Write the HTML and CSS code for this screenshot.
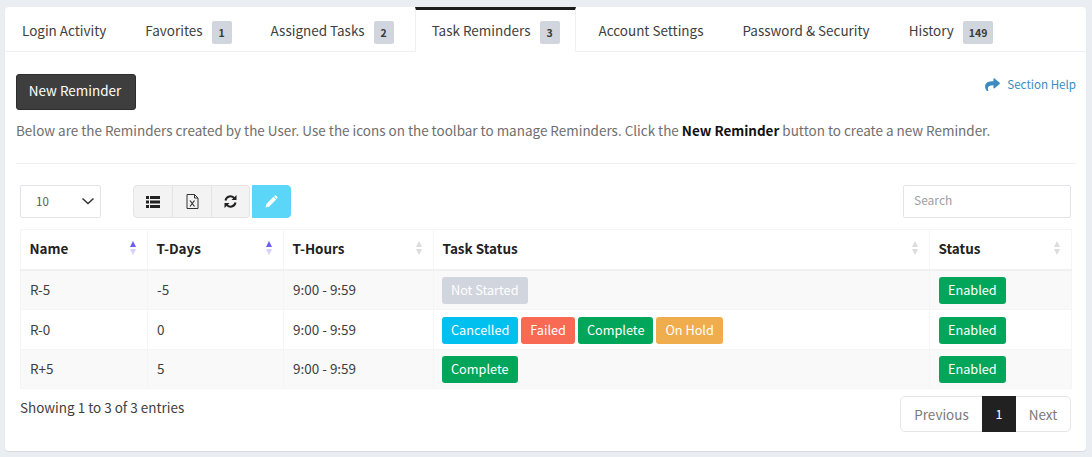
FILE: index.html
```html
<!DOCTYPE html>
<html lang="en">
<head>
<meta charset="utf-8">
<title>Task Reminders</title>
<link rel="stylesheet" href="styles.css">
</head>
<body>
<main class="card">
  <nav class="tabs">
    <a class="tab">Login Activity</a>
    <a class="tab">Favorites <span class="count">1</span></a>
    <a class="tab">Assigned Tasks <span class="count">2</span></a>
    <a class="tab active">Task Reminders <span class="count">3</span></a>
    <a class="tab">Account Settings</a>
    <a class="tab">Password &amp; Security</a>
    <a class="tab">History <span class="count">149</span></a>
  </nav>
  <section class="body">
    <div class="top">
      <button class="new">New Reminder</button>
      <a class="help">
        <svg width="15" height="13" viewBox="0 0 512 448"><path fill="#3a8bc2" d="M503 167 327 15c-15-13-39-3-39 18v80C127 115 0 147 0 299c0 61 39 122 83 154 13 10 33-2 28-18C66 290 132 251 288 249v88c0 21 24 31 39 18l176-152c11-9 11-27 0-36z"/></svg>
        Section Help
      </a>
    </div>
    <p class="intro">Below are the Reminders created by the User. Use the icons on the toolbar to manage Reminders. Click the <b>New Reminder</b> button to create a new Reminder.</p>
    <hr class="rule">
    <div class="controls">
      <div class="select">10
        <svg width="14" height="8" viewBox="0 0 14 8"><path d="M1.500 1.500 7 6.500l5.500-5" fill="none" stroke="#333" stroke-width="1.500"/></svg>
      </div>
      <div class="tools">
        <button class="tool">
          <svg width="14" height="12" viewBox="0 0 14 12"><path fill="#222" d="M0 0h3v3H0zM4 0h10v3H4zM0 4.500h3v3H0zM4 4.500h10v3H4zM0 9h3v3H0zM4 9h10v3H4z"/></svg>
        </button>
        <button class="tool">
          <svg width="13" height="15" viewBox="0 0 13 15"><path fill="none" stroke="#333" d="M1 .5h7.500l3.500 3.500v10.500H1zM8.500.5V4H12"/><path fill="none" stroke="#333" stroke-width="1.200" d="m4 6.500 4.500 6M8.500 6.500l-4.500 6"/></svg>
        </button>
        <button class="tool">
          <svg width="13" height="13" viewBox="0 0 13 13"><path fill="none" stroke="#222" stroke-width="2" d="M1.500 5.500A5 5 0 0 1 10.500 3.500M11.500 7.500A5 5 0 0 1 2.500 9.500"/><path fill="#222" d="M12.500 0v5h-5zM.5 13V8h5z"/></svg>
        </button>
        <button class="tool edit">
          <svg width="13" height="13" viewBox="0 0 13 13"><path fill="#fff" d="M8.500 1.800 11.200 4.500 4 11.700l-3.500.8.800-3.500zM9.400.9c.6-.6 1.400-.6 2 0l.7.700c.6.600.6 1.400 0 2l-.3.300L9.100 1.200z"/></svg>
        </button>
      </div>
      <input class="search" type="text" placeholder="Search">
    </div>
    <table class="grid">
      <colgroup>
        <col class="c1"><col class="c2"><col class="c3"><col class="c4"><col class="c5">
      </colgroup>
      <thead>
        <tr>
          <th class="on">Name<span class="sort"><i class="up"></i><i class="down"></i></span></th>
          <th class="on">T-Days<span class="sort"><i class="up"></i><i class="down"></i></span></th>
          <th>T-Hours<span class="sort"><i class="up"></i><i class="down"></i></span></th>
          <th>Task Status<span class="sort"><i class="up"></i><i class="down"></i></span></th>
          <th>Status<span class="sort"><i class="up"></i><i class="down"></i></span></th>
        </tr>
      </thead>
      <tbody>
        <tr class="odd">
          <td>R-5</td><td>-5</td><td>9:00 - 9:59</td>
          <td><span class="tag grey">Not Started</span></td>
          <td><span class="tag green">Enabled</span></td>
        </tr>
        <tr>
          <td>R-0</td><td>0</td><td>9:00 - 9:59</td>
          <td><span class="tag blue">Cancelled</span><span class="tag red">Failed</span><span class="tag green">Complete</span><span class="tag amber">On Hold</span></td>
          <td><span class="tag green">Enabled</span></td>
        </tr>
        <tr class="odd">
          <td>R+5</td><td>5</td><td>9:00 - 9:59</td>
          <td><span class="tag green">Complete</span></td>
          <td><span class="tag green">Enabled</span></td>
        </tr>
      </tbody>
    </table>
    <div class="foot">
      <div class="info">Showing 1 to 3 of 3 entries</div>
      <div class="pager">
        <a class="page">Previous</a>
        <a class="page current">1</a>
        <a class="page">Next</a>
      </div>
    </div>
  </section>
</main>
</body>
</html>
```
FILE: styles.css
```css
* { box-sizing: border-box; }
html, body { height: 100%; }
body {
  margin: 0;
  padding: 7px 6px 6px 5px;
  background: #eaeef3;
  color: #3e3e3e;
  font-family: "Noto Sans CJK JP", "Noto Sans", sans-serif;
  font-size: 13.48px;
  line-height: 20px;
  overflow: hidden;
}
.card {
  height: 444px;
  background: #fff;
  border-radius: 4px;
  box-shadow: 0 1px 1px #d6dae0;
}
.tabs {
  display: flex;
  height: 45px;
  gap: 5px;
  border-bottom: 1px solid #eef0f3;
}
.tab {
  display: flex;
  align-items: center;
  gap: 9px;
  padding: 0 17px;
  white-space: nowrap;
  height: 45px;
}
.tab.active {
  background: #fff;
  border-top: 3px solid #1c1c1c;
  border-left: 1px solid #eef0f3;
  border-right: 1px solid #eef0f3;
  padding: 0 15px 3px 16px;
  margin-left: -1px;
  margin-right: 1px;
}
.count {
  display: inline-block;
  min-width: 20px;
  height: 23px;
  padding: 0 6px;
  margin-top: 5px;
  background: #d1d5de;
  color: #3a3a3a;
  border-radius: 2px;
  font-size: 10.5px;
  font-weight: 700;
  line-height: 23px;
  text-align: center;
}
.body { padding: 22px 10px 0 11px; }
.top {
  display: flex;
  justify-content: space-between;
  align-items: flex-start;
}
.new {
  height: 36px;
  width: 120px;
  padding: 0 2px 5px 0;
  background: #3e3e3e;
  color: #fff;
  border: 1px solid #2c2c2c;
  border-radius: 3px;
  font: inherit;
}
.help {
  display: flex;
  align-items: center;
  gap: 7px;
  color: #3a8bc2;
  font-size: 11.6px;
  line-height: 20px;
  height: 20px;
}
.intro {
  margin: 10px 0 0;
  color: #6e6e6e;
  line-height: 20px;
  white-space: nowrap;
}
.intro b { color: #111; font-weight: 700; }
.rule {
  margin: 23px 0 0;
  border: 0;
  border-top: 1px solid #eef0f3;
}
.controls {
  display: flex;
  align-items: flex-start;
  margin: 21px 5px 0 4px;
  height: 44px;
}
.select {
  display: flex;
  align-items: center;
  justify-content: space-between;
  width: 81px;
  height: 33px;
  padding: 0 5px 2px 15px;
  border: 1px solid #e2e4ea;
  border-radius: 2px;
  font-size: 11.5px;
  color: #555;
}
.tools {
  display: flex;
  margin-left: 32px;
}
.tool {
  display: flex;
  align-items: center;
  justify-content: center;
  width: 39px;
  height: 33px;
  padding: 0;
  background: #f3f3f3;
  border: 1px solid #e4e4e4;
  border-left-width: 0;
}
.tool:first-child { border-left-width: 1px; border-radius: 4px 0 0 4px; width: 40px; }
.tool:nth-child(3) { border-radius: 0 4px 4px 0; width: 38px; }
.tool.edit {
  margin-left: 2px;
  background: #5bd6f8;
  border: 1px solid #5bd6f8;
  border-radius: 0 4px 4px 0;
}
.search {
  width: 168px;
  height: 33px;
  margin-left: auto;
  padding: 0 10px 4px;
  border: 1px solid #e2e4ea;
  border-radius: 2px;
  font-family: inherit;
  font-size: 12px;
  outline: 0;
}
.search::placeholder { color: #a0a0a0; opacity: 1; }
.grid {
  width: 1051px;
  margin-left: 4px;
  border-collapse: collapse;
  table-layout: fixed;
}
.c1 { width: 127px; }
.c2 { width: 136px; }
.c3 { width: 150px; }
.c4 { width: 496px; }
.c5 { width: 142px; }
th, td {
  padding: 0 9px 2px;
  border: 1px solid #f5f5f6;
  text-align: left;
  font-weight: 400;
  white-space: nowrap;
}
th {
  position: relative;
  height: 40px;
  color: #222;
  font-weight: 700;
  padding-left: 8.5px;
  border-bottom-width: 2px;
  border-bottom-color: #f0f1f3;
}
td { height: 40px; }
tbody tr:last-child td { height: 39px; }
td:nth-child(4) { padding-left: 8px; }
.odd td { background: #f9f9f9; }
.sort {
  position: absolute;
  top: 11px;
  right: 11.5px;
  display: flex;
  flex-direction: column;
  gap: 2px;
}
.sort i {
  display: block;
  width: 0;
  height: 0;
  border-left: 3px solid transparent;
  border-right: 3px solid transparent;
}
.sort .up { border-bottom: 6px solid #dcdcdc; }
.sort .down { border-top: 6px solid #dcdcdc; }
.on .sort .up { border-bottom-color: #6a5ef5; }
.on .sort .down { border-top-color: #d6d2fb; }
.tag {
  display: inline-block;
  height: 27px;
  margin-right: 3px;
  margin-top: 3px;
  padding: 0 9px;
  border-radius: 3px;
  color: #fff;
  font-size: 12.7px;
  line-height: 25px;
  vertical-align: middle;
}
.grey { background: #d1d5de; }
.green { background: #02a65a; }
.blue { background: #00c0f0; }
.red { background: #f96a55; }
.amber { background: #f0ad4e; }
.foot {
  display: flex;
  justify-content: space-between;
  align-items: flex-start;
  margin: 6px 5px 0 4px;
}
.info { color: #3e3e3e; padding-top: 2px; }
.pager {
  display: flex;
  height: 36px;
  border: 1px solid #e6e6e6;
  border-radius: 5px;
  margin-top: 1px;
}
.page {
  display: flex;
  align-items: center;
  justify-content: center;
  width: 81px;
  color: #7a7a7a;
  padding-bottom: 1px;
}
.page.current {
  width: 34px;
  margin: -1px 0;
  background: #212121;
  color: #fff;
  font-size: 12.5px;
}
.page:last-child { width: 54px; }
```
